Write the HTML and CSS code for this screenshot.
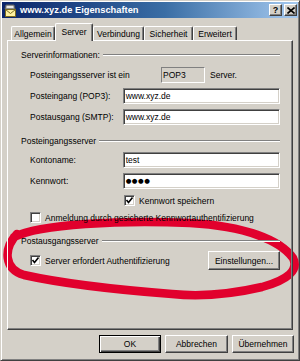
FILE: index.html
```html
<!DOCTYPE html>
<html lang="de">
<head>
  <meta charset="UTF-8">
  <title>www.xyz.de Eigenschaften</title>
  <link rel="stylesheet" href="styles.css">
</head>
<body>

  <div class="window">
    <div class="titlebar">
      <svg class="app-icon" width="14" height="14" viewBox="0 0 14 14">
        <path d="M2 6 L3 2 L11 2 L12 6 Z" fill="#b8b8b8" stroke="#606060" stroke-width="1"/>
        <rect x="4" y="3" width="6" height="2" fill="#e8e8e8"/>
        <rect x="2.5" y="6.5" width="10" height="7" fill="#fff2a0" stroke="#7a6a20" stroke-width="1"/>
        <path d="M2.5 6.5 L7.5 10.5 L12.5 6.5" fill="none" stroke="#7a6a20" stroke-width="1"/>
      </svg>
      <span class="title">www.xyz.de Eigenschaften</span>
      <div class="title-btns">
        <span class="tbtn help">?</span>
        <span class="tbtn">
          <svg width="8" height="7" viewBox="0 0 8 7">
            <path d="M0.5 0.5 L7.5 6.5 M7.5 0.5 L0.5 6.5" stroke="#000" stroke-width="1.6"/>
          </svg>
        </span>
      </div>
    </div>

    <div class="tabs">
      <div class="tab w-allg">Allgemein</div>
      <div class="tab active w-serv">Server</div>
      <div class="tab w-verb">Verbindung</div>
      <div class="tab w-sich">Sicherheit</div>
      <div class="tab w-erw">Erweitert</div>
    </div>

    <div class="page">
      <div class="group-title g1"><span>Serverinformationen:</span><i class="rule"></i></div>

      <div class="row pop-row">
        <span class="pop-label">Posteingangsserver ist ein</span>
        <span class="readonly">POP3</span>
        <span class="after">Server.</span>
      </div>
      <div class="row field f1">
        <span class="lbl">Posteingang (POP3):</span>
        <div class="input">www.xyz.de</div>
      </div>
      <div class="row field f2">
        <span class="lbl">Postausgang (SMTP):</span>
        <div class="input">www.xyz.de</div>
      </div>

      <div class="group-title g2"><span>Posteingangsserver</span><i class="rule"></i></div>

      <div class="row field f3">
        <span class="lbl">Kontoname:</span>
        <div class="input">test</div>
      </div>
      <div class="row field f4">
        <span class="lbl">Kennwort:</span>
        <div class="input pass">●●●●</div>
      </div>
      <div class="row check c1">
        <span class="box checked"></span>
        <span>Kennwort speichern</span>
      </div>
      <div class="row check c2">
        <span class="box"></span>
        <span>Anmeldung durch gesicherte Kennwortauthentifizierung</span>
      </div>

      <div class="group-title g3"><span>Postausgangsserver</span><i class="rule"></i></div>

      <div class="row check c3">
        <span class="box checked"></span>
        <span>Server erfordert Authentifizierung</span>
        <button class="btn settings">Einstellungen...</button>
      </div>
    </div>

    <div class="buttons">
      <button class="btn default w-ok">OK</button>
      <button class="btn w-cancel">Abbrechen</button>
      <button class="btn w-apply">Übernehmen</button>
    </div>
  </div>

  <!-- roter Kringel um den Postausgangsserver -->
  <svg class="scribble" width="300" height="361" viewBox="0 0 300 361">
    <path d="M14 237 C 40 224 120 220 190 223 C 245 226 280 240 293 258 C 299 270 288 280 262 287 C 232 294 202 297 172 294 C 120 290 60 283 24 275 C 4 269 3 249 17 234"
          fill="none" stroke="#e1002d" stroke-width="8.5" stroke-linecap="round"/>
  </svg>

</body>
</html>
```

FILE: styles.css
```css
body {
  margin: 0;
  font-family: 'Liberation Sans', Arial, sans-serif;
  font-size: 8.5px;
  color: #000;
  background: #d4d0c8;
}

.window {
  position: relative;
  width: 300px;
  height: 361px;
  box-sizing: border-box;
  padding: 1px;
  background: #d4d0c8;
  border: 1px solid;
  border-color: #d4d0c8 #404040 #404040 #d4d0c8;
  box-shadow: inset 1px 1px #fff, inset -1px -1px #808080;
}

.titlebar {
  height: 16px;
  display: flex;
  align-items: center;
  padding: 0 1px 0 1px;
  background: linear-gradient(to right, #0a246a, #3a6ea5 55%, #a6caf0);
}

.app-icon {
  flex: none;
}

.title {
  margin-left: 3px;
  color: #fff;
  font-weight: bold;
  font-size: 9.3px;
  flex: 1;
}

.title-btns {
  display: flex;
  gap: 2px;
}

.tbtn {
  width: 13px;
  height: 12px;
  box-sizing: border-box;
  display: flex;
  align-items: center;
  justify-content: center;
  background: #d4d0c8;
  border: 1px solid;
  border-color: #fff #404040 #404040 #fff;
  box-shadow: inset -1px -1px #808080;
  font-weight: bold;
  font-size: 9px;
}

.tabs {
  height: 17px;
  margin-top: 5px;
  padding-left: 9px;
  display: flex;
  align-items: flex-end;
}

.tab {
  height: 14px;
  box-sizing: border-box;
  display: flex;
  align-items: center;
  justify-content: center;
  border-top: 1px solid #fff;
  border-left: 1px solid #fff;
  border-right: 1px solid #404040;
  border-radius: 2px 2px 0 0;
  box-shadow: inset -1px 0 #808080;
  padding-top: 1px;
}

.tab.active {
  height: 18px;
  margin-bottom: -1px;
  position: relative;
  z-index: 2;
  background: #d4d0c8;
  padding-bottom: 3px;
}

.w-allg { width: 44px; }
.w-serv { width: 38px; }
.w-verb { width: 51px; }
.w-sich { width: 49px; }
.w-erw { width: 44px; }

.page {
  position: relative;
  z-index: 1;
  height: 290px;
  margin: 0 5px;
  box-sizing: border-box;
  padding: 0 12px 0 13px;
  border: 1px solid;
  border-color: #fff #404040 #404040 #fff;
  box-shadow: inset -1px -1px #808080;
  display: flex;
  flex-direction: column;
}

.group-title {
  height: 14px;
  display: flex;
  align-items: center;
}

.rule {
  flex: 1;
  height: 0;
  margin-left: 3px;
  border-top: 1px solid #808080;
  border-bottom: 1px solid #fff;
}

.g1 { margin-top: 7px; }
.g2 { margin-top: 9px; }
.g3 { margin-top: 10px; }

.row {
  display: flex;
  align-items: center;
  padding-left: 9px;
}

.pop-row {
  height: 16px;
  margin-top: 5px;
}

.pop-label {
  width: 131px;
}

.readonly {
  width: 44px;
  height: 16px;
  box-sizing: border-box;
  padding-left: 1px;
  display: flex;
  align-items: center;
  border: 1px solid;
  border-color: #808080 #fff #fff #808080;
}

.after {
  margin-left: 5px;
}

.field {
  height: 16px;
}

.f1, .f2, .f4 { margin-top: 5px; }
.f3 { margin-top: 4px; }

.lbl {
  width: 93px;
}

.input {
  width: 158px;
  height: 16px;
  box-sizing: border-box;
  padding-left: 2px;
  display: flex;
  align-items: center;
  background: #fff;
  border: 1px solid;
  border-color: #808080 #fff #fff #808080;
  box-shadow: inset 1px 1px #404040, inset -1px -1px #d4d0c8;
}

.pass {
  font-family: 'DejaVu Sans', sans-serif;
  font-size: 6.5px;
  letter-spacing: 0.5px;
}

.check {
  height: 13px;
}

.c1 {
  margin-top: 5px;
  padding-left: 103px;
}

.c2 { margin-top: 4px; }

.c3 {
  height: 19px;
  margin-top: 3px;
}

.box {
  width: 11px;
  height: 11px;
  box-sizing: border-box;
  margin-right: 4px;
  flex: none;
  background: #fff;
  border: 1px solid;
  border-color: #808080 #fff #fff #808080;
  box-shadow: inset 1px 1px #404040, inset -1px -1px #d4d0c8;
}

.box.checked {
  background: #fff url("data:image/svg+xml,%3Csvg xmlns='http://www.w3.org/2000/svg' width='9' height='9'%3E%3Cpath d='M1.5 4 L3.5 6.5 L7.5 1.5' fill='none' stroke='%23000' stroke-width='1.6'/%3E%3C/svg%3E") center / 9px 9px no-repeat;
}

.btn {
  height: 18px;
  box-sizing: border-box;
  margin: 0;
  padding: 0;
  font-family: inherit;
  font-size: 8.5px;
  color: #000;
  background: #d4d0c8;
  border: 1px solid;
  border-color: #fff #404040 #404040 #fff;
  box-shadow: inset -1px -1px #808080;
}

.settings {
  width: 72px;
  height: 19px;
  margin-left: auto;
}

.buttons {
  height: 18px;
  margin-top: 5px;
  padding-right: 4px;
  display: flex;
  justify-content: flex-end;
  gap: 4px;
}

.btn.default {
  border-color: #000;
  box-shadow: inset 1px 1px #fff, inset -1px -1px #404040, inset -2px -2px #808080;
}

.w-ok { width: 62px; }
.w-cancel { width: 63px; }
.w-apply { width: 62px; }

.scribble {
  position: absolute;
  top: 0;
  left: 0;
  pointer-events: none;
}
```
